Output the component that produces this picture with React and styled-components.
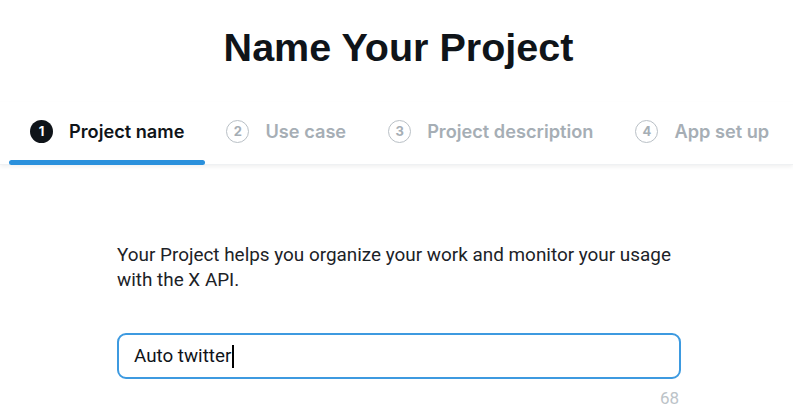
import React from 'react'
import styled, { createGlobalStyle } from 'styled-components'

const steps = ['Project name', 'Use case', 'Project description', 'App set up']

const GlobalStyle = createGlobalStyle`
  html, body {
    margin: 0;
    padding: 0;
    background: #fff;
  }
  body {
    font-family: Inter, "Liberation Sans", sans-serif;
    color: #0f1419;
  }
`

const Page = styled.div`
  display: flex;
  flex-direction: column;
  align-items: stretch;
  padding-top: 24px;
`

const Title = styled.h1`
  margin: 0;
  text-align: center;
  font-family: "Liberation Sans", Arial, sans-serif;
  font-weight: 700;
  font-size: 39.5px;
  line-height: 46px;
  color: #0f1419;
  padding-left: 4px;
`

const TabBar = styled.nav`
  display: flex;
  margin-top: 32px;
  padding-left: 9px;
  box-shadow: 0 2px 4px rgba(0, 0, 0, 0.06);
  border-bottom: 1px solid #eff1f3;
`

const Tab = styled.div`
  display: flex;
  align-items: center;
  gap: 16px;
  padding: 0 21px 4px 21px;
  height: 62px;
  box-sizing: border-box;
  position: relative;
  font-size: 18.2px;
  font-weight: 600;
  white-space: nowrap;
  color: ${p => (p.$active ? '#0f1419' : '#a6aeb5')};
  &::after {
    content: '';
    display: ${p => (p.$active ? 'block' : 'none')};
    position: absolute;
    left: 0;
    right: 0;
    bottom: -1px;
    height: 5px;
    border-radius: 3px;
    background: #2a90dc;
  }
`

const StepNum = styled.span`
  width: 23px;
  height: 23px;
  flex-shrink: 0;
  box-sizing: border-box;
  border-radius: 50%;
  display: flex;
  align-items: center;
  justify-content: center;
  font-size: 13px;
  font-weight: 700;
  background: ${p => (p.$active ? '#0f1419' : '#fff')};
  color: ${p => (p.$active ? '#fff' : '#a6aeb5')};
  border: ${p => (p.$active ? 'none' : '1.5px solid #b9c0c6')};
`

const Content = styled.section`
  width: 564px;
  margin: 77px 0 0 117px;
  display: flex;
  flex-direction: column;
`

const Intro = styled.p`
  margin: 0;
  font-family: Roboto, "Liberation Sans", sans-serif;
  font-size: 18.9px;
  line-height: 25px;
  color: #1c2227;
`

const Field = styled.div`
  margin-top: 41px;
  height: 46px;
  box-sizing: border-box;
  border: 2px solid #3d9ae0;
  border-radius: 9px;
  display: flex;
  align-items: center;
  padding-left: 15px;
  font-family: Roboto, "Liberation Sans", sans-serif;
  font-size: 18.8px;
  color: #0f1419;
`

const Caret = styled.span`
  display: inline-block;
  width: 2px;
  height: 23px;
  background: #000;
  margin-left: 1px;
`

const Counter = styled.div`
  align-self: flex-end;
  margin-top: 9px;
  margin-right: 2px;
  font-family: Roboto, "Liberation Sans", sans-serif;
  font-size: 17px;
  color: #bcc3c8;
`

const App = () => {
  return (
    <Page>
      <GlobalStyle />
      <Title>Name Your Project</Title>
      <TabBar>
        {steps.map((s, i) => (
          <Tab key={s} $active={i === 0}>
            <StepNum $active={i === 0}>{i + 1}</StepNum>
            {s}
          </Tab>
        ))}
      </TabBar>
      <Content>
        <Intro>
          Your Project helps you organize your work and monitor your usage
          with the X API.
        </Intro>
        <Field>
          Auto twitter
          <Caret />
        </Field>
        <Counter>68</Counter>
      </Content>
    </Page>
  )
}

export default App
